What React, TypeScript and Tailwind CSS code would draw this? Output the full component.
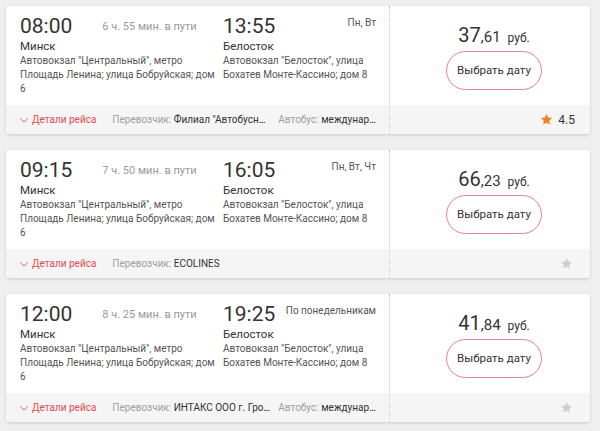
import React from "react";

type Trip = {
  dep: string;
  arr: string;
  dur: string;
  days: string;
  price: string;
  cents: string;
  carrier: string;
  bus?: string;
  rating?: string;
};

const trips: Trip[] = [
  {
    dep: "08:00",
    arr: "13:55",
    dur: "6 ч. 55 мин. в пути",
    days: "Пн, Вт",
    price: "37",
    cents: ",61",
    carrier: "Филиал \"Автобусный парк №6\"",
    bus: "международный",
    rating: "4.5",
  },
  {
    dep: "09:15",
    arr: "16:05",
    dur: "7 ч. 50 мин. в пути",
    days: "Пн, Вт, Чт",
    price: "66",
    cents: ",23",
    carrier: "ECOLINES",
  },
  {
    dep: "12:00",
    arr: "19:25",
    dur: "8 ч. 25 мин. в пути",
    days: "По понедельникам",
    price: "41",
    cents: ",84",
    carrier: "ИНТАКС ООО г. Гродно",
    bus: "международный",
  },
];

function Star({ color }: { color: string }) {
  return (
    <svg width="13" height="13" viewBox="0 0 24 24" fill={color}>
      <path d="M12 1.8l3.1 6.6 7.2.9-5.3 5 1.4 7.1L12 17.9l-6.4 3.5 1.4-7.1-5.3-5 7.2-.9z" />
    </svg>
  );
}

function Card({ t }: { t: Trip }) {
  return (
    <div className="flex w-[584px] h-[128px] bg-white rounded-[2px] shadow-[0_1px_3px_rgba(0,0,0,0.16)] overflow-hidden">
      <div className="flex flex-col w-[383px]">
        <div className="flex flex-1 pl-[14px] pt-[8px]">
          <div className="w-[195px] flex flex-col">
            <div className="flex items-start h-[24px]">
              <span className="text-[21px] leading-[24px] text-[#333]">{t.dep}</span>
              <span className="ml-[30px] mt-[6px] text-[11px] leading-[13px] text-[#9a9a9a]">{t.dur}</span>
            </div>
            <div className="text-[11.5px] leading-[16px] text-[#333]">Минск</div>
            <div className="text-[10px] leading-[14px] text-[#555]">
              Автовокзал "Центральный", метро Площадь Ленина; улица Бобруйская; дом 6
            </div>
          </div>
          <div className="w-[153px] ml-[8px] flex flex-col">
            <div className="flex items-start justify-between h-[24px]">
              <span className="text-[21px] leading-[24px] text-[#333]">{t.arr}</span>
              <span className="mt-[2px] text-[10px] leading-[13px] text-[#555]">{t.days}</span>
            </div>
            <div className="text-[11.5px] leading-[16px] text-[#333]">Белосток</div>
            <div className="text-[10px] leading-[14px] text-[#555]">
              Автовокзал "Белосток", улица Бохатев Монте-Кассино; дом 8
            </div>
          </div>
        </div>
        <div className="h-[29px] bg-[#f5f5f5] flex items-center pl-[14px] pr-[10px] text-[10px] whitespace-nowrap">
          <svg width="8" height="5" viewBox="0 0 8 5" className="mt-[2px]">
            <polyline points="0.5,0.5 4,4 7.5,0.5" fill="none" stroke="#ec6a6e" strokeWidth="1" />
          </svg>
          <span className="ml-[4px] text-[10px] text-[#e94b4f]">Детали рейса</span>
          <span className="ml-[16px] max-w-[158px] truncate">
            <span className="text-[#9e9e9e]">Перевозчик: </span>
            <span className="text-[#333]">{t.carrier}</span>
          </span>
          {t.bus && (
            <span className="ml-[8px] min-w-0 flex-1 truncate">
              <span className="text-[#9e9e9e]">Автобус: </span>
              <span className="text-[#333]">{t.bus}</span>
            </span>
          )}
        </div>
      </div>
      <div className="flex flex-col flex-1 border-l border-dotted border-[#c8c8c8]">
        <div className="flex-1 flex flex-col items-center pl-[8px] pt-[17px]">
          <div className="flex items-baseline leading-[24px] text-[#333]">
            <span className="text-[20px]">{t.price}</span>
            <span className="text-[15px]">{t.cents}</span>
            <span className="ml-[7px] text-[12px]">руб.</span>
          </div>
          <button className="mt-[1px] w-[96px] h-[39px] rounded-full border border-[#e8808b] text-[11.5px] text-[#333] bg-white">
            Выбрать дату
          </button>
        </div>
        <div className="h-[29px] bg-[#f5f5f5] flex items-center justify-end pr-[15px]">
          {t.rating ? (
            <>
              <Star color="#f5821f" />
              <span className="ml-[5px] text-[12px] text-[#333]">{t.rating}</span>
            </>
          ) : (
            <span className="mr-[2px]">
              <Star color="#cfcfcf" />
            </span>
          )}
        </div>
      </div>
    </div>
  );
}

export default function App() {
  return (
    <div
      className="min-h-screen bg-[#efefef] pt-[6px] pl-[6px] flex flex-col gap-[16px]"
      style={{ fontFamily: "Roboto, 'Noto Sans', sans-serif" }}
    >
      {trips.map((t, i) => (
        <Card key={i} t={t} />
      ))}
    </div>
  );
}
